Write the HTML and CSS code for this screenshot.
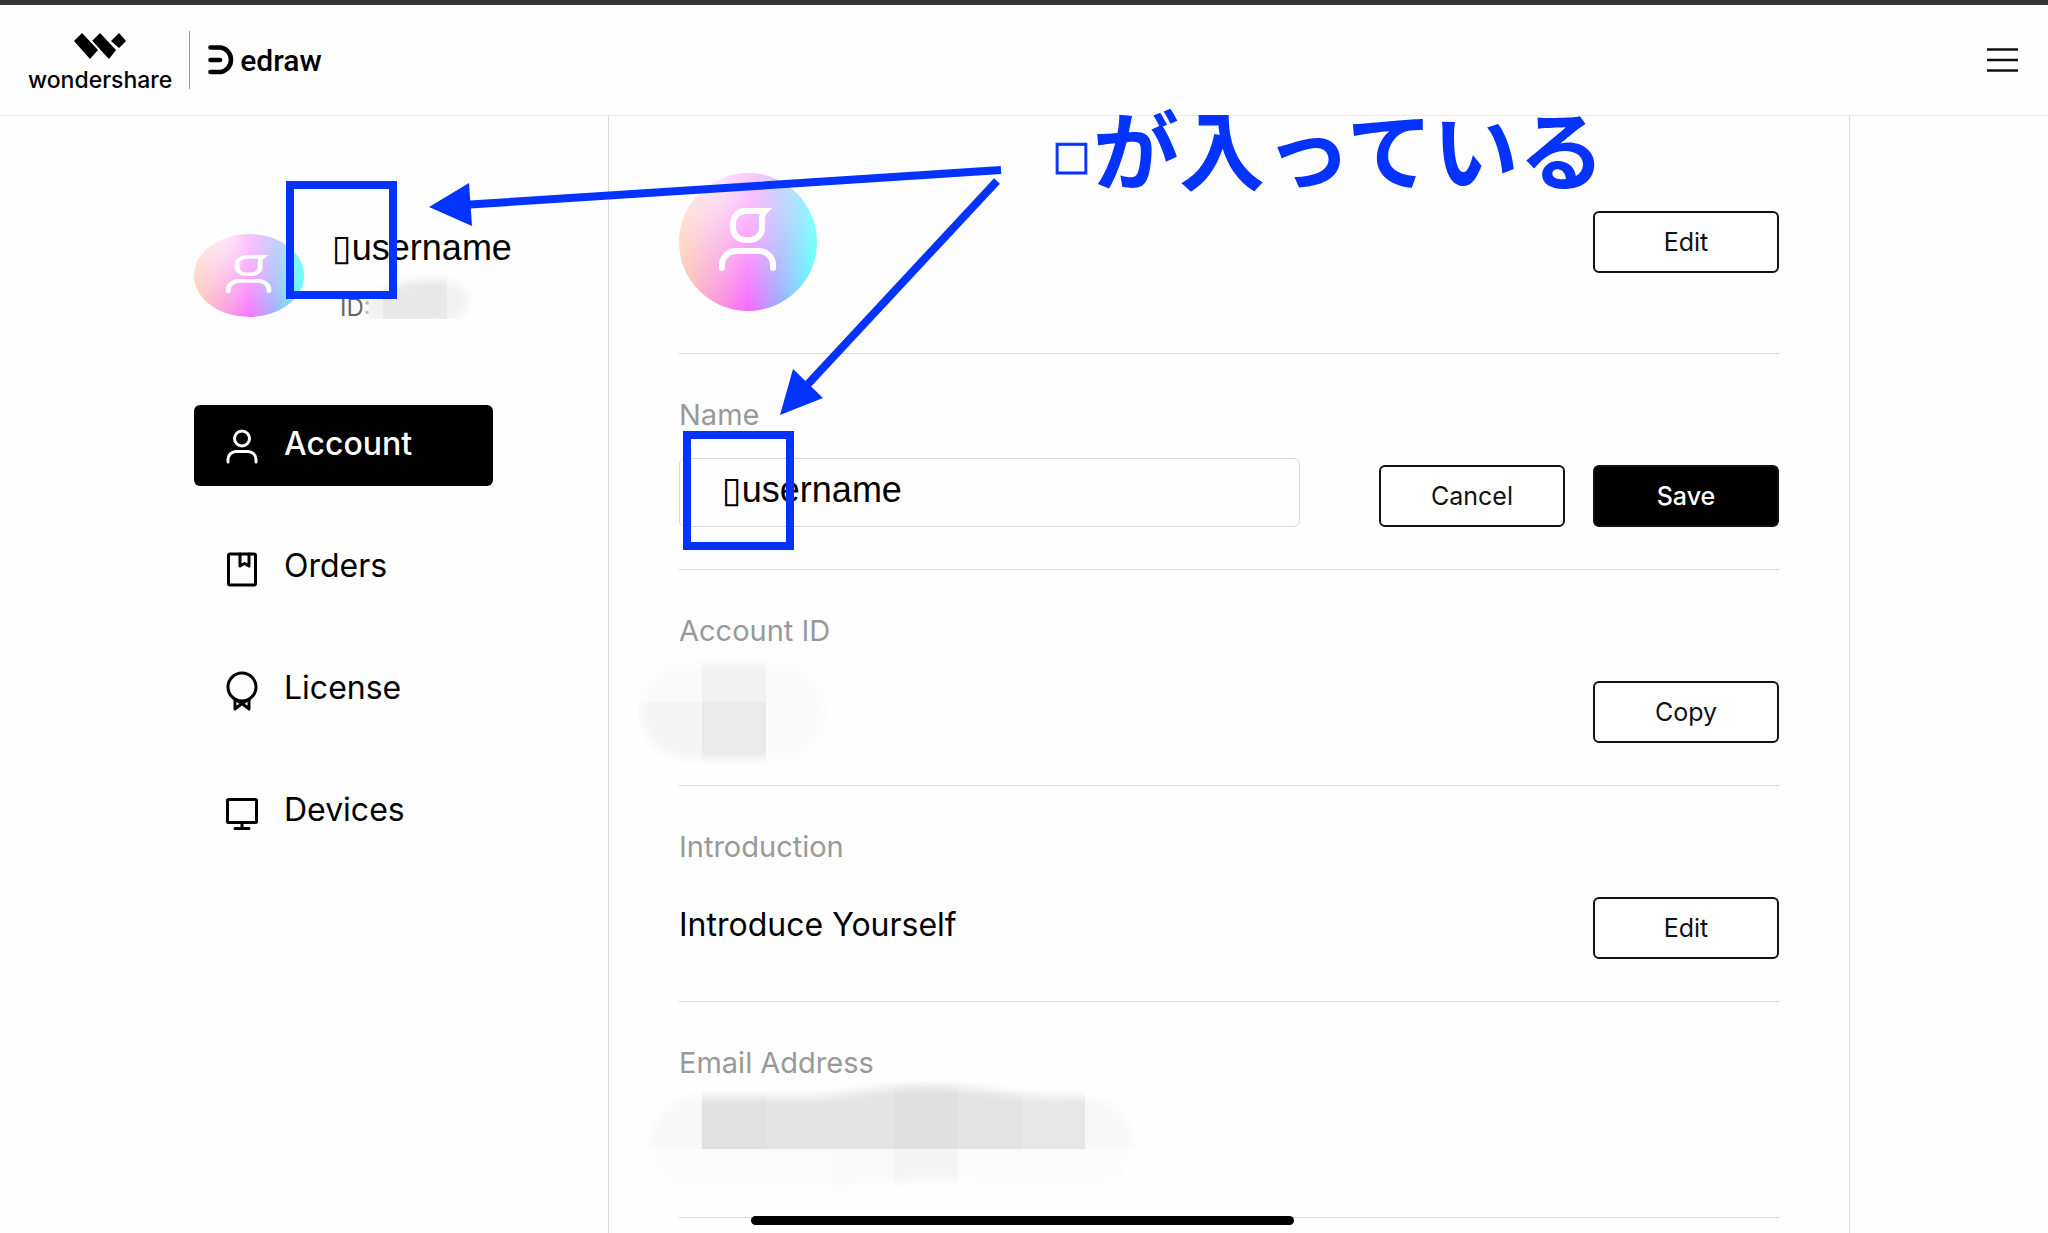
FILE: index.html
```html
<!DOCTYPE html>
<html lang="en">

<head>
    <meta charset="UTF-8">
    <meta name="viewport" content="width=device-width, initial-scale=1.0">
    <title>Account</title>
    <link rel="stylesheet" href="styles.css">
</head>

<body>
    <header class="header">
        <a class="logo" href="#">
            <svg width="52" height="26" viewBox="0 0 52 26">
                <path d="M0 8L8 0L24 17L16 26ZM18 8L26 0L42 17L35 26ZM37 8L45 0L52 8L45 15Z" />
                <path d="M17 7L27 18M36 8L44 17" stroke="#fff" stroke-width="1" />
            </svg>
            <span>wondershare</span>
        </a>
        <a class="product" href="#">
            <svg width="27" height="30" viewBox="0 0 27 30">
                <path d="M2.5 2.5H13A12.5 12.5 0 0 1 13 27H2.5M2.5 15H12" fill="none" stroke="#000" stroke-width="4.6" stroke-linecap="round" />
            </svg>
            <span>edraw</span>
        </a>
        <button class="menu" aria-label="Menu">
            <svg width="32" height="26" viewBox="0 0 32 26">
                <path d="M0 2.5H31M0 13H31M0 23.5H31" stroke="#111" stroke-width="2.6" />
            </svg>
        </button>
    </header>

    <div class="container">
        <aside class="sidebar">
            <div class="profile">
                <div class="avatar avatar-small">
                    <svg viewBox="0 0 138 138" preserveAspectRatio="none">
                        <path d="M66 38H86Q83 41 83 46V55A12 12 0 0 1 71 67H66A12 12 0 0 1 54 55V50A12 12 0 0 1 66 38Z" />
                        <path d="M82 35H90L84 42Z" class="tip" />
                        <path d="M43 95V92A14 14 0 0 1 57 78H80A14 14 0 0 1 94 92V95" />
                    </svg>
                </div>
                <div class="profile-text">
                    <p class="username">▯username</p>
                    <p class="user-id">ID:</p>
                </div>
            </div>
            <nav class="nav">
                <a class="nav-item active" href="#">
                    <svg viewBox="0 0 32 36">
                        <circle cx="16" cy="9.5" r="7.5" />
                        <path d="M2 33V30A8 8 0 0 1 10 22.500H22A8 8 0 0 1 30 30V33" />
                    </svg>
                    Account
                </a>
                <a class="nav-item" href="#">
                    <svg viewBox="0 0 32 36">
                        <rect x="2.500" y="3" width="27" height="31" rx="1.500" />
                        <path d="M14 3V15L18.500 12.500L23 15V3" />
                    </svg>
                    Orders
                </a>
                <a class="nav-item" href="#">
                    <svg viewBox="0 0 32 36">
                        <circle cx="16" cy="14" r="14" />
                        <path d="M9 27V36L16 30.500L23 36V27M12 28L16 31L20 28" />
                    </svg>
                    License
                </a>
                <a class="nav-item" href="#">
                    <svg viewBox="0 0 32 36">
                        <rect x="1.500" y="4.500" width="29" height="23" rx="1" />
                        <path d="M16 28V33M9 33.500H23" />
                    </svg>
                    Devices
                </a>
            </nav>
        </aside>

        <main class="content">
            <section class="row row-avatar">
                <div class="avatar">
                    <svg viewBox="0 0 138 138">
                        <path d="M66 38H86Q83 41 83 46V55A12 12 0 0 1 71 67H66A12 12 0 0 1 54 55V50A12 12 0 0 1 66 38Z" />
                        <path d="M82 35H90L84 42Z" class="tip" />
                        <path d="M43 95V92A14 14 0 0 1 57 78H80A14 14 0 0 1 94 92V95" />
                    </svg>
                </div>
                <button class="btn">Edit</button>
            </section>
            <section class="row">
                <div class="field">
                    <label class="label" for="name">Name</label>
                    <input class="input" id="name" type="text" value="▯username">
                </div>
                <div class="actions">
                    <button class="btn">Cancel</button>
                    <button class="btn btn-dark">Save</button>
                </div>
            </section>
            <section class="row">
                <div class="field">
                    <h2 class="label">Account ID</h2>
                    <p class="value"></p>
                </div>
                <button class="btn">Copy</button>
            </section>
            <section class="row">
                <div class="field">
                    <h2 class="label">Introduction</h2>
                    <p class="value">Introduce Yourself</p>
                </div>
                <button class="btn">Edit</button>
            </section>
            <section class="row">
                <div class="field">
                    <h2 class="label">Email Address</h2>
                    <p class="value"></p>
                </div>
            </section>
        </main>
    </div>

    <!-- hidden values and marker notes drawn over the page -->
    <svg class="notes" width="2048" height="1233" viewBox="0 0 2048 1233">
        <defs>
            <filter id="soft" x="-20%" y="-20%" width="140%" height="140%">
                <feGaussianBlur stdDeviation="4" />
            </filter>
            <mask id="mask-user">
                <path d="M366 322V300Q390 280 440 280Q470 284 468 302T440 322Z" fill="#fff" filter="url(#soft)" />
            </mask>
            <mask id="mask-id">
                <rect x="641" y="664" width="183" height="94" rx="47" fill="#fff" filter="url(#soft)" />
            </mask>
            <mask id="mask-mail">
                <path d="M696 1097H800C850 1097 870 1086 925 1086S1000 1097 1085 1097A46 46 0 0 1 1086 1189C1000 1189 970 1180 930 1180S860 1189 698 1189A46 46 0 0 1 696 1097Z" fill="#fff" filter="url(#soft)" />
            </mask>
        </defs>
        <g mask="url(#mask-user)">
            <rect x="362" y="270" width="114" height="49" fill="#f2f2f2" />
            <rect x="383" y="270" width="64" height="49" fill="#e8e8e8" />
        </g>
        <g mask="url(#mask-id)">
            <rect x="638" y="650" width="64" height="52" fill="#fafafa" />
            <rect x="638" y="702" width="64" height="64" fill="#f5f5f5" />
            <rect x="702" y="650" width="64" height="52" fill="#f2f2f2" />
            <rect x="702" y="702" width="64" height="64" fill="#eaeaea" />
            <rect x="766" y="650" width="64" height="116" fill="#fafafa" />
        </g>
        <g mask="url(#mask-mail)">
            <rect x="638" y="1080" width="500" height="69" fill="#f8f8f8" />
            <rect x="638" y="1149" width="500" height="46" fill="#fcfcfc" />
            <rect x="702" y="1080" width="64" height="69" fill="#e1e1e1" />
            <rect x="766" y="1080" width="128" height="69" fill="#e4e4e4" />
            <rect x="894" y="1080" width="64" height="69" fill="#e0e0e0" />
            <rect x="958" y="1080" width="64" height="69" fill="#e3e3e3" />
            <rect x="1022" y="1080" width="63" height="69" fill="#e7e7e7" />
            <rect x="830" y="1149" width="64" height="46" fill="#fafafa" />
            <rect x="894" y="1149" width="64" height="46" fill="#f5f5f5" />
        </g>
        <g class="marker">
            <rect x="290" y="185" width="103" height="110" />
            <rect x="687" y="435" width="103" height="111" />
            <path d="M1001 170L470 204.500M997 181L808 384" />
            <path class="head" d="M429 207L469 183L472 226ZM780 415L793 369L823 398Z" />
        </g>
        <text class="note-box" x="1056" y="174">□</text>
        <text class="note-text" x="1093" y="184">が入っている</text>
    </svg>
    <div class="home-bar"></div>
</body>

</html>
```

FILE: styles.css
```css
* {
    padding: 0;
    margin: 0;
    box-sizing: border-box;
}

body {
    position: relative;
    display: flex;
    flex-direction: column;
    min-height: 100vh;
    overflow-x: hidden;
    background-color: #fefefe;
    color: #000000;
    font-family: "Inter", "DejaVu Sans", sans-serif;
}

a {
    color: inherit;
    text-decoration: none;
}

.header {
    display: flex;
    align-items: center;
    height: 116px;
    padding: 0 29px 0 28px;
    border-top: 5px solid #323639;
    border-bottom: 1px solid #ececec;
}

.logo {
    display: flex;
    flex-direction: column;
    align-items: center;
    gap: 8px;
    height: 58px;
    padding-top: 2px;
    padding-right: 17px;
    border-right: 1px solid #999999;
    font-size: 23px;
    font-weight: 500;
    line-height: 26px;
}

.logo svg {
    flex: none;
}

.product {
    display: flex;
    align-items: center;
    gap: 5px;
    padding-left: 18px;
    font-family: "Roboto", sans-serif;
    font-size: 30px;
    font-weight: 500;
}

.menu {
    display: flex;
    margin-left: auto;
    border: none;
    background: none;
}

.container {
    display: flex;
    flex: 1;
    padding: 0 198px 0 194px;
}

.sidebar {
    width: 414px;
    padding-top: 109px;
}

.profile {
    display: flex;
    align-items: center;
    gap: 28px;
}

.profile-text {
    display: flex;
    flex-direction: column;
    gap: 19px;
}

.username {
    font-family: "Liberation Sans", "DejaVu Sans Light", "DejaVu Sans", sans-serif;
    font-size: 36px;
    line-height: 46px;
}

.user-id {
    padding-left: 8px;
    color: #666666;
    font-size: 24px;
    line-height: 36px;
}

.avatar {
    flex: none;
    width: 138px;
    height: 138px;
    border-radius: 50%;
    background:
        radial-gradient(circle at 25% 0%, rgba(255, 255, 255, 0.85), rgba(255, 255, 255, 0) 95%),
        linear-gradient(90deg, #ffbe98, #f558ff 50%, #9aa4ff 72%, #55fcff 97%);
}

.avatar svg {
    display: block;
    width: 100%;
    height: 100%;
    fill: none;
    stroke: #ffffff;
    stroke-width: 6;
    stroke-linecap: round;
}

.avatar .tip {
    fill: #ffffff;
    stroke: none;
}

.avatar-small {
    width: 110px;
    height: 83px;
}

.nav {
    display: flex;
    flex-direction: column;
    gap: 41px;
    width: 299px;
    margin-top: 79px;
}

.nav-item {
    display: flex;
    align-items: center;
    gap: 26px;
    height: 81px;
    padding-left: 32px;
    padding-bottom: 4px;
    border-radius: 6px;
    font-size: 32px;
}

.nav-item svg {
    width: 32px;
    height: 36px;
    margin-top: 6px;
    overflow: visible;
    fill: none;
    stroke: currentColor;
    stroke-width: 3;
    stroke-linecap: round;
    stroke-linejoin: round;
}

.nav-item.active {
    background-color: #000000;
    color: #ffffff;
    font-weight: 500;
}

.content {
    flex: 1;
    padding: 0 70px;
    border-left: 1px solid #d9d9d9;
    border-right: 1px solid #d9d9d9;
}

.row {
    display: flex;
    align-items: flex-end;
    justify-content: space-between;
    padding: 43px 0 42px;
    border-bottom: 1px solid #d9d9d9;
}

.row-avatar {
    align-items: center;
    padding: 57px 0 42px;
}

.field {
    display: flex;
    flex-direction: column;
    gap: 25px;
    width: 621px;
}

.label {
    color: #999999;
    font-size: 29px;
    font-weight: 400;
    line-height: 36px;
}

.value {
    height: 69px;
    font-size: 32px;
    line-height: 69px;
}

.input {
    width: 100%;
    height: 69px;
    padding: 0 42px 6px;
    border: 1px solid #d9d9d9;
    border-radius: 6px;
    background: none;
    font-family: "Liberation Sans", "DejaVu Sans Light", "DejaVu Sans", sans-serif;
    font-size: 36px;
}

.actions {
    display: flex;
    gap: 28px;
}

.btn {
    width: 186px;
    height: 62px;
    border: 2px solid #111111;
    border-radius: 6px;
    background-color: #ffffff;
    color: #111111;
    font-family: inherit;
    font-size: 25px;
}

.btn-dark {
    background-color: #000000;
    color: #ffffff;
    font-weight: 500;
}

.notes {
    position: absolute;
    top: 0;
    left: 0;
    pointer-events: none;
}

.marker {
    fill: none;
    stroke: #0433ff;
    stroke-width: 8;
}

.marker .head {
    fill: #0433ff;
    stroke: none;
}

.note-text,
.note-box {
    fill: #0433ff;
    font-family: "Noto Sans CJK JP", sans-serif;
    font-size: 86px;
    font-weight: 700;
}

.note-box {
    stroke: #0433ff;
    stroke-width: 1;
    font-family: "Liberation Sans", sans-serif;
    font-size: 51px;
    font-weight: 400;
}

.home-bar {
    position: absolute;
    bottom: 8px;
    left: 751px;
    width: 543px;
    height: 9px;
    border-radius: 5px;
    background-color: #000000;
}
```
